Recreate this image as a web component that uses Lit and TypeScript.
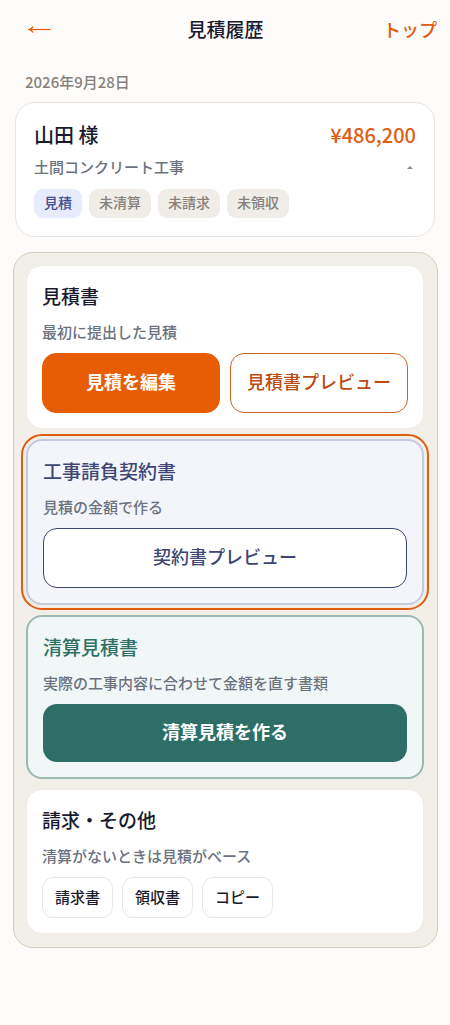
import { LitElement, html, css } from "lit";
import { customElement, property, state } from "lit/decorators.js";

interface Status {
  label: string;
  done: boolean;
}

@customElement("status-tag")
class StatusTag extends LitElement {
  @property({ type: Boolean }) done = false;

  static styles = css`
    :host {
      display: block;
    }
    .tag {
      display: block;
      padding: 0 10px 2px;
      border-radius: 9px;
      background: #f0ede8;
      color: #85817a;
      font-size: 14px;
      line-height: 27px;
      font-weight: 500;
    }
    .done {
      background: #e6ecfd;
      color: #3c4c8c;
    }
  `;

  render() {
    return html`<span class="tag ${this.done ? "done" : ""}"><slot></slot></span>`;
  }
}

@customElement("document-card")
class DocumentCard extends LitElement {
  @property() heading = "";
  @property() note = "";
  @property() tone = "plain";

  static styles = css`
    :host {
      display: block;
    }
    .card {
      display: flex;
      flex-direction: column;
      gap: 9px;
      padding: 15px;
      border: 1px solid #f0ede8;
      border-radius: 16px;
      background: #ffffff;
      color: #1a1a2e;
    }
    .contract {
      border: 2px solid #c3cbdc;
      background: #f4f5fb;
      color: #3d4674;
      outline: 2px solid #e05d10;
      outline-offset: 3px;
    }
    .settlement {
      border: 2px solid #9cb8b3;
      background: #f1f7f7;
      color: #2d7064;
    }
    .heading {
      margin: 0;
      font-size: 19px;
      line-height: 30px;
      font-weight: 500;
    }
    .note {
      margin: 0;
      color: #6b7280;
      font-size: 15px;
      line-height: 24px;
      font-weight: 500;
    }
  `;

  render() {
    return html`
      <section class="card ${this.tone}">
        <h2 class="heading">${this.heading}</h2>
        <p class="note">${this.note}</p>
        <slot></slot>
      </section>
    `;
  }
}

@customElement("app-root")
class AppRoot extends LitElement {
  @state() private open = true;

  private statuses: Status[] = [
    { label: "見積", done: true },
    { label: "未清算", done: false },
    { label: "未請求", done: false },
    { label: "未領収", done: false },
  ];

  static styles = css`
    :host {
      display: block;
      box-sizing: border-box;
      min-height: 100vh;
      padding-bottom: 24px;
      background: #fefcfa;
      color: #1a1a2e;
      font-family: "Noto Sans CJK JP", sans-serif;
      font-weight: 500;
    }
    .bar {
      display: grid;
      grid-template-columns: 1fr auto 1fr;
      align-items: center;
      height: 58px;
      padding: 0 13px 0 28px;
    }
    .back {
      justify-self: start;
      display: flex;
      color: #e05d10;
    }
    .title {
      margin: 0;
      padding-right: 14px;
      font-size: 19px;
      line-height: 28px;
      font-weight: 500;
    }
    .home {
      justify-self: end;
      color: #e05d10;
      font-size: 18px;
      line-height: 28px;
      text-decoration: none;
    }
    .date {
      margin: 0;
      padding: 12px 25px 8px;
      color: #85817a;
      font-size: 15px;
      line-height: 24px;
    }
    .summary {
      margin: 0 15px;
      padding: 18px;
      border: 1px solid #e8e6e3;
      border-radius: 20px;
      background: #ffffff;
    }
    .row {
      display: flex;
      align-items: center;
      justify-content: space-between;
    }
    .name {
      margin: 0;
      font-size: 20px;
      line-height: 28px;
      font-weight: 500;
    }
    .price {
      color: #e05d10;
      font-size: 20px;
      line-height: 28px;
    }
    .detail {
      margin: 6px 0 10px;
    }
    .work {
      margin: 0;
      color: #6b7280;
      font-size: 15px;
      line-height: 24px;
    }
    .toggle {
      display: flex;
      padding: 3px;
      border: 0;
      background: none;
      color: #8f8b86;
    }
    .tags {
      display: flex;
      flex-wrap: wrap;
      gap: 7px;
    }
    .panel {
      display: flex;
      flex-direction: column;
      gap: 10px;
      margin: 15px 12px 0 13px;
      padding: 12px 13px 13px 12px;
      border: 1px solid #d3cdc0;
      border-radius: 20px;
      background: #f2efe9;
    }
    .pair {
      display: grid;
      grid-template-columns: 1fr 1fr;
      gap: 10px;
    }
    .button {
      width: 100%;
      min-height: 60px;
      padding: 0 8px 4px;
      border: 1px solid currentColor;
      border-radius: 14px;
      background: #ffffff;
      font: inherit;
      font-size: 18px;
      line-height: 28px;
    }
    .edit {
      border-color: #e85d04;
      background: #e85d04;
      color: #ffffff;
      font-weight: 700;
    }
    .preview {
      border-color: #cf6420;
      color: #bc4a14;
    }
    .agreement {
      color: #3d4674;
    }
    .settle {
      min-height: 58px;
      border: 0;
      background: #2d6f66;
      color: #ffffff;
      font-weight: 700;
    }
    .minor {
      display: flex;
      flex-wrap: wrap;
      gap: 9px;
    }
    .small {
      padding: 0 12px 2px;
      border: 1px solid #e8e6e3;
      border-radius: 11px;
      background: #ffffff;
      color: #1a1a2e;
      font: inherit;
      font-size: 15px;
      line-height: 37px;
    }
  `;

  private toggle() {
    this.open = !this.open;
  }

  render() {
    return html`
      <header class="bar">
        <a class="back" href="#back" aria-label="戻る">
          <svg width="24" height="24" viewBox="0 0 24 24" fill="none" stroke="currentColor">
            <path d="M2 12.5H22.5" stroke-width="1.2" />
            <path d="M5 9.5Q4 11.5 1.5 12.5Q4 13.5 5 15.5" stroke-width="1.4" />
          </svg>
        </a>
        <h1 class="title">見積履歴</h1>
        <a class="home" href="#top">トップ</a>
      </header>
      <main>
        <p class="date">2026年9月28日</p>
        <article class="summary">
          <div class="row">
            <h2 class="name">山田 様</h2>
            <span class="price">¥486,200</span>
          </div>
          <div class="row detail">
            <p class="work">土間コンクリート工事</p>
            <button class="toggle" aria-label="詳細" aria-expanded=${this.open} @click=${this.toggle}>
              <svg width="6" height="3" viewBox="0 0 6 3" fill="currentColor">
                <path d=${this.open ? "M0 3L3 0L6 3Z" : "M0 0L3 3L6 0Z"} />
              </svg>
            </button>
          </div>
          <div class="tags">
            ${this.statuses.map((s) => html`<status-tag ?done=${s.done}>${s.label}</status-tag>`)}
          </div>
        </article>
        ${this.open
          ? html`
              <div class="panel">
                <document-card heading="見積書" note="最初に提出した見積">
                  <div class="pair">
                    <button class="button edit">見積を編集</button>
                    <button class="button preview">見積書プレビュー</button>
                  </div>
                </document-card>
                <document-card tone="contract" heading="工事請負契約書" note="見積の金額で作る">
                  <button class="button agreement">契約書プレビュー</button>
                </document-card>
                <document-card
                  tone="settlement"
                  heading="清算見積書"
                  note="実際の工事内容に合わせて金額を直す書類"
                >
                  <button class="button settle">清算見積を作る</button>
                </document-card>
                <document-card heading="請求・その他" note="清算がないときは見積がベース">
                  <div class="minor">
                    <button class="small">請求書</button>
                    <button class="small">領収書</button>
                    <button class="small">コピー</button>
                  </div>
                </document-card>
              </div>
            `
          : null}
      </main>
    `;
  }
}
